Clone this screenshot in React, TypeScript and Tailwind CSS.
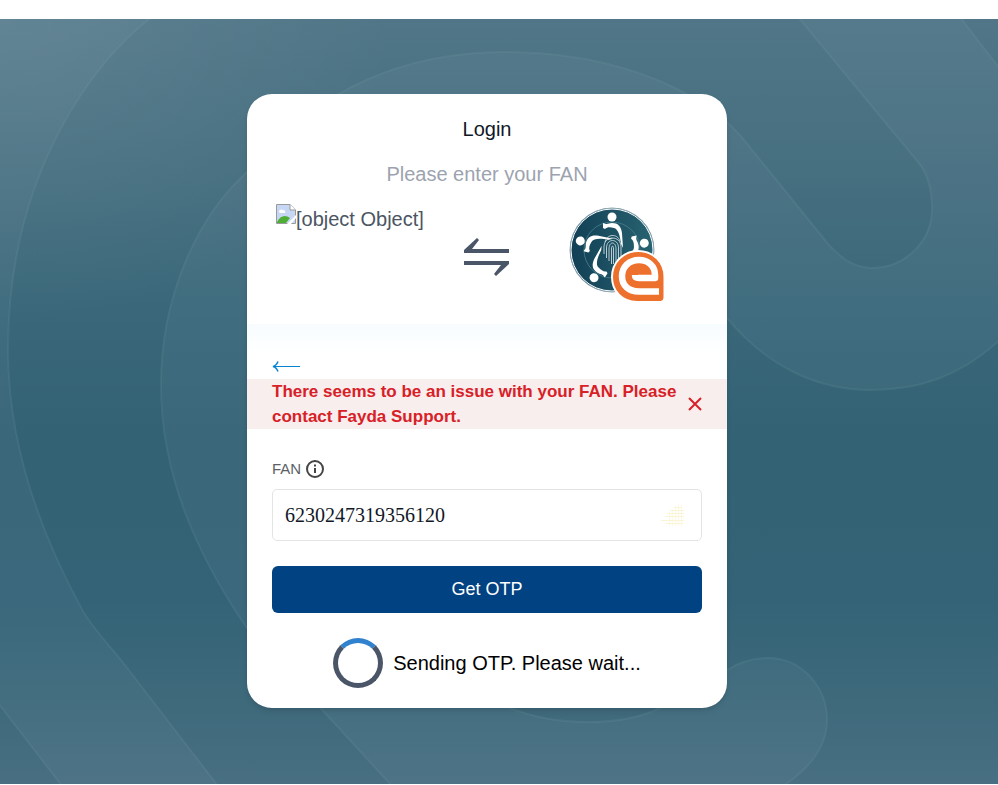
import { useState } from "react";

function Backdrop() {
  return (
    <svg
      className="absolute inset-0 h-full w-full"
      viewBox="0 0 998 765"
      preserveAspectRatio="xMidYMid slice"
      aria-hidden="true"
    >
      <defs>
        <linearGradient id="base" x1="0" y1="0" x2="0" y2="1">
          <stop offset="0" stopColor="#507687" />
          <stop offset="0.2" stopColor="#466f80" />
          <stop offset="0.38" stopColor="#3a687a" />
          <stop offset="0.55" stopColor="#336274" />
          <stop offset="0.76" stopColor="#346377" />
          <stop offset="0.88" stopColor="#3d697b" />
          <stop offset="1" stopColor="#486f82" />
        </linearGradient>
        <radialGradient id="glow" cx="0" cy="0" r="0.4">
          <stop offset="0" stopColor="#fff" stopOpacity="0.08" />
          <stop offset="1" stopColor="#fff" stopOpacity="0" />
        </radialGradient>
      </defs>
      <rect width="998" height="765" fill="url(#base)" />
      <rect width="998" height="765" fill="url(#glow)" />
      <g
        fill="#b4ccd2"
        fillOpacity="0.055"
        stroke="#8fb8b8"
        strokeOpacity="0.12"
        strokeWidth="2"
      >
        <path d="M152 -2C98 38 8 150 8 331C8 420 38 510 83 592C95 612 110 627 125 646L218 767H62L-2 684V-2Z" />
        <path d="M392 767L246 608C200 540 161 460 161 366C161 280 195 200 247 153C320 66 410 33 505 33C600 33 690 62 740 116L825 221C840 240 855 249 872 249C905 249 932 222 932 190C932 170 928 155 918 143L798 -2H960L1000 50V321C960 357 920 371 870 371C815 371 765 345 727 299L487 280L510 689C535 699 560 703 587 703C615 703 640 699 660 689L727 651C740 643 753 639 768 639C802 639 827 668 827 701C827 725 812 748 783 767Z" />
      </g>
    </svg>
  );
}

function BrokenImage() {
  return (
    <svg className="mt-[3px] h-5 w-5 shrink-0" viewBox="0 0 20 20" aria-hidden="true">
      <path d="M.5.5H14L19.5 6V19.5H.5Z" fill="#c6d7f5" stroke="#9a9a9a" />
      <path d="M14 .5V6H19.5" fill="#fff" stroke="#9a9a9a" />
      <path d="M3 8C3 5 6 5 7 6C9 6 10 8 9 9H4Z" fill="#fff" />
      <path d="M1 18C4 12 9 10 14 14L10 19H1Z" fill="#4fae35" />
      <path d="M11 20L20 11V14L15 20Z" fill="#fff" />
    </svg>
  );
}

function Figure({ transform }: { transform: string }) {
  return (
    <g transform={transform} fill="#fff">
      <circle cx="43" cy="10" r="4.500" />
      <path d="M34 16L37 17C40 17 40 16 43 16C49 16 52 19 53 26L54 41L52 37C51 28 49 22 45 21C41 20 38 20 36 22L34 21Z" />
    </g>
  );
}

function Logo() {
  return (
    <svg className="h-24 w-24" viewBox="0 0 96 96" role="img" aria-label="Fayda eSignet">
      <defs>
        <linearGradient id="disc" x1="0" y1="0" x2="1" y2="0">
          <stop offset="0" stopColor="#113f55" />
          <stop offset="1" stopColor="#286371" />
        </linearGradient>
      </defs>
      <circle cx="43" cy="43" r="42" fill="url(#disc)" stroke="#8ba5b1" />
      <circle cx="43" cy="43" r="41" fill="none" stroke="#fff" />
      <circle cx="43" cy="43" r="28" fill="none" stroke="#4b7f8f" strokeWidth=".8" />
      <Figure transform="rotate(0 43 43)" />
      <Figure transform="rotate(78 43 43)" />
      <Figure transform="rotate(213 43 43)" />
      <Figure transform="rotate(286 43 43)" />
      <g fill="none" stroke="#e3eef0" strokeWidth=".8">
        <path d="M35 47V40C35 28 52 28 52 40V50" />
        <path d="M37.500 51V41C37.500 31 49.500 31 49.500 41V53" />
        <path d="M40 54V42C40 34 47 34 47 42V55" />
        <path d="M42.500 57V42C42.500 38 44.500 38 44.500 42V57M36 35C38 27 48 26 51 34" />
      </g>
      <path
        d="M69 44C84 44 95.500 55 95.500 70V90Q95.500 95 91 95H68C53 95 43 84 43 70C43 55 55 44 69 44Z"
        fill="#ee702d"
        stroke="#fff"
        strokeWidth="2"
      />
      <path
        d="M90 84.500H70C59 84.500 53 78 53 69C53 60 60 53 70 53C79 53 86 59 86 68V71H70C67 71 66 70 66 68"
        fill="none"
        stroke="#fff"
        strokeWidth="6.500"
        strokeLinejoin="round"
      />
    </svg>
  );
}

function SwapArrows() {
  return (
    <svg className="mt-9 h-10 w-[46px] justify-self-center" viewBox="0 0 46 40" fill="#4a5568" aria-hidden="true">
      <path d="M0 16V13L13 1L15 3L8 12H45V16Z" />
      <path d="M0 24H45V27L32 39L30 37L37 28H0Z" />
    </svg>
  );
}

export default function App() {
  const [fan, setFan] = useState("6230247319356120");
  const [showError, setShowError] = useState(true);

  return (
    <div className="flex min-h-screen flex-col bg-white pt-[19px] pb-px font-['Liberation_Sans',Arial,sans-serif]">
      <main className="relative flex flex-1 justify-center overflow-hidden bg-[#3d6c7d] pt-[75px] pr-6 pb-[76px]">
        <Backdrop />
        <div className="relative flex w-full max-w-[480px] flex-col self-start overflow-hidden rounded-[25px] bg-white pb-5 shadow-md">
          <header className="flex flex-col px-[29px] pt-5 text-center text-xl">
            <h1 className="leading-[30px] text-[#111827]">Login</h1>
            <p className="mt-[15px] leading-[30px] text-[#9ca3af]">Please enter your FAN</p>
            <div className="mt-3 grid h-[123px] grid-cols-[1fr_96px_1fr] items-start">
              <div className="flex text-[#4b5563]">
                <BrokenImage />
                <span className="leading-9 whitespace-nowrap">[object Object]</span>
              </div>
              <SwapArrows />
              <div className="justify-self-center pt-1.5">
                <Logo />
              </div>
            </div>
          </header>

          <div className="h-[30px] bg-linear-to-b from-[#f7fcff] to-white" />

          <button type="button" aria-label="Go back" className="ml-[25px] flex h-[25px] w-8 items-center">
            <svg className="h-[11px] w-7" viewBox="0 0 28 11" fill="none" stroke="#0784d0" aria-hidden="true">
              <path d="M2 5.500H28" />
              <path d="M6 0.500C5 3 3 5 1 5.500C3 6 5 8 6 10.500" strokeWidth="1.500" />
            </svg>
          </button>

          {showError && (
            <div
              role="alert"
              className="flex items-center justify-between bg-[#f9eeee] px-[25px] text-[17px] leading-[25px] font-bold text-[#d82027]"
            >
              <p className="min-w-0">There seems to be an issue with your FAN. Please contact Fayda Support.</p>
              <button type="button" aria-label="Dismiss" className="shrink-0" onClick={() => setShowError(false)}>
                <svg className="h-3.5 w-3.5" viewBox="0 0 14 14" stroke="currentColor" strokeWidth="2" aria-hidden="true">
                  <path d="M1 1L13 13M13 1L1 13" />
                </svg>
              </button>
            </div>
          )}

          <form className="px-[25px] pt-[30px]" onSubmit={(event) => event.preventDefault()}>
            <div className="flex h-5 items-center gap-[5px] text-[#5c5f66]">
              <label htmlFor="fan" className="text-[15px]">
                FAN
              </label>
              <svg className="h-[18px] w-[18px]" viewBox="0 0 18 18" fill="none" stroke="#444" strokeWidth="2" aria-hidden="true">
                <circle cx="9" cy="9" r="8" />
                <path d="M9 8V13M9 4.500V6.500" />
              </svg>
            </div>
            <div className="mt-2.5 flex h-[52px] items-center rounded-[5px] border border-[#e3e4e6] pr-4 pl-3">
              <input
                id="fan"
                value={fan}
                onChange={(event) => setFan(event.target.value)}
                className="min-w-0 flex-1 bg-transparent font-['Liberation_Serif',serif] text-xl text-[#111827] outline-none"
              />
              <svg className="h-6 w-6" viewBox="0 0 24 24" fill="none" stroke="#fbf5d4" aria-hidden="true">
                <path d="M13 4.500H21M9 7.500H23M6 10.500H23M4 13.500H23M0 17.500H23M5 20.500H22" />
                <path d="M8.500 9V23M11.500 6V23M14.500 3V23M17.500 2V23M20.500 2V23" strokeOpacity=".6" />
              </svg>
            </div>
            <button type="submit" className="mt-[25px] block h-[47px] w-full rounded-md bg-[#004282] pb-0.5 text-lg text-white">
              Get OTP
            </button>
          </form>

          <div role="status" className="mt-[25px] flex items-center justify-center gap-2.5 text-xl text-black">
            <span className="h-[50px] w-[50px] rounded-full border-[5px] border-[#4a5568] border-t-[#3182ce]" />
            <span>Sending OTP. Please wait...</span>
          </div>
        </div>
      </main>
    </div>
  );
}
